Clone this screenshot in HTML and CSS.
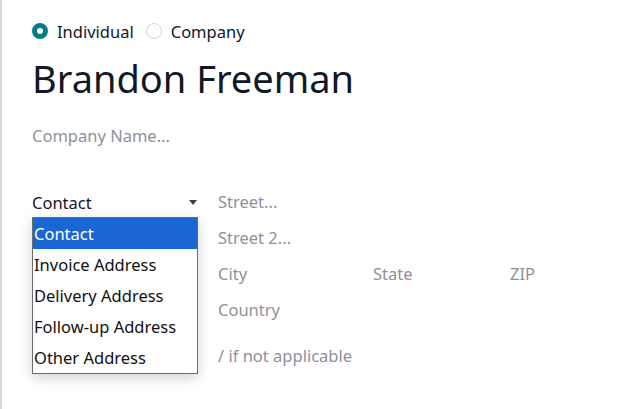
FILE: index.html
```html
<!DOCTYPE html>
<html>
<head>
<meta charset="utf-8">
<link rel="stylesheet" href="styles.css">
</head>
<body>
<div class="sheet">
  <div class="radios">
    <label class="radio"><span class="dot on"></span><span>Individual</span></label>
    <label class="radio"><span class="dot"></span><span>Company</span></label>
  </div>
  <h1 class="name">Brandon Freeman</h1>
  <div class="company">Company Name...</div>
  <div class="address">
    <div class="left">
      <div class="select">
        <span>Contact</span>
        <span class="caret"></span>
      </div>
      <ul class="menu">
        <li class="sel">Contact</li>
        <li>Invoice Address</li>
        <li>Delivery Address</li>
        <li>Follow-up Address</li>
        <li>Other Address</li>
      </ul>
    </div>
    <div class="right">
      <div class="row">Street...</div>
      <div class="row">Street 2...</div>
      <div class="row three"><span>City</span><span>State</span><span>ZIP</span></div>
      <div class="row">Country</div>
      <div class="row vat">/ if not applicable</div>
    </div>
  </div>
</div>
</body>
</html>
```
FILE: styles.css
```css
html, body {
  margin: 0;
  padding: 0;
  background: #fff;
}
body {
  font-family: "Noto Sans", "Open Sans", sans-serif;
  color: #111827;
  font-size: 16.5px;
}
.sheet {
  border-left: 2px solid #d8dade;
  min-height: 409px;
  box-sizing: border-box;
  padding: 21px 0 0 30px;
}
.radios {
  display: flex;
  align-items: center;
  gap: 12px;
  height: 20px;
}
.radio {
  display: flex;
  align-items: center;
  gap: 9px;
}
.dot {
  width: 16px;
  height: 16px;
  border-radius: 50%;
  border: 1px solid #d5d5d8;
  box-sizing: border-box;
  background: #fff;
}
.dot.on {
  border: 5px solid #017e84;
  background: #fff;
}
.name {
  margin: 11px 0 0 0;
  font-weight: 400;
  font-size: 38px;
  line-height: 52px;
  color: #111827;
}
.company {
  margin-top: 21px;
  color: #8f9198;
  line-height: 22px;
}
.address {
  margin-top: 44px;
  display: grid;
  grid-template-columns: 166px 1fr;
  column-gap: 20px;
}
.left {
  position: relative;
}
.select {
  display: flex;
  justify-content: space-between;
  align-items: center;
  height: 22px;
}
.caret {
  width: 0;
  height: 0;
  border-left: 4px solid transparent;
  border-right: 4px solid transparent;
  border-top: 5px solid #374151;
  margin-right: 1px;
}
.menu {
  position: absolute;
  top: 26px;
  left: 0;
  width: 166px;
  box-sizing: border-box;
  margin: 0;
  padding: 0;
  list-style: none;
  background: #fff;
  border: 1px solid #6b6b6b;
  box-shadow: 0 4px 12px rgba(0, 0, 0, 0.18);
}
.menu li {
  height: 31px;
  line-height: 31px;
  padding-left: 1px;
  color: #111;
  white-space: nowrap;
}
.menu li.sel {
  background: #1967d2;
  color: #fff;
}
.right {
  display: flex;
  flex-direction: column;
}
.row {
  height: 36px;
  line-height: 22px;
  color: #8f9198;
}
.three {
  display: grid;
  grid-template-columns: 155px 137px 1fr;
}
.vat {
  margin-top: 10px;
}
```
